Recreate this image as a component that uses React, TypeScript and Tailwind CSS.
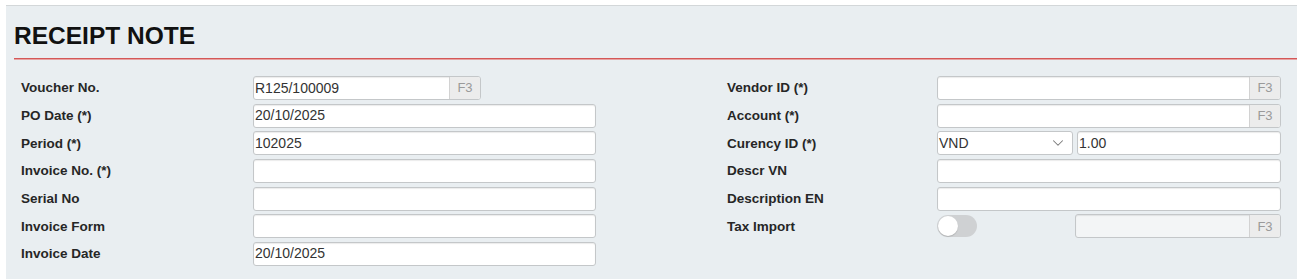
import { ChevronDown } from 'lucide-react';

const font = { fontFamily: '"Liberation Sans", Arial, sans-serif' };

function Label({ text }: { text: string }) {
  return <div className="flex items-center text-[13.5px] font-bold text-[#262626] leading-none">{text}</div>;
}

function TextBox({ value = '', className = '' }: { value?: string; className?: string }) {
  return (
    <div className={`h-[24px] flex items-center bg-white border border-[#c4c7c9] rounded-[3px] shadow-[inset_0_1px_1px_rgba(0,0,0,0.08)] px-[1px] text-[14px] text-[#333] ${className}`}>
      {value}
    </div>
  );
}

function LookupBox({ value = '', className = '', disabled = false }: { value?: string; className?: string; disabled?: boolean }) {
  return (
    <div className={`h-[24px] flex border border-[#c4c7c9] rounded-[3px] overflow-hidden shadow-[inset_0_1px_1px_rgba(0,0,0,0.08)] ${disabled ? 'bg-[#f3f5f6]' : 'bg-white'} ${className}`}>
      <div className="flex-1 flex items-center px-[1px] text-[14px] text-[#333]">{value}</div>
      <div className="w-[31px] flex items-center justify-center bg-[#ececec] border-l border-[#d2d2d2] text-[13px] text-[#9a9a9a]">F3</div>
    </div>
  );
}

export default function App() {
  return (
    <div className="w-[1297px] h-[279px] bg-white pt-[5px] pl-[6px] overflow-hidden" style={font}>
      <div className="h-full bg-[#e9eef1] border-t border-[#d3d7d9]">
        <div className="pl-[8px] pt-[18px]">
          <div className="text-[24.5px] leading-[24px] font-bold text-[#111]">RECEIPT NOTE</div>
          <div className="mt-[10px] h-[2px] bg-[#d45757] border-b border-[#e6a3a3]" />
        </div>

        <div className="mt-[16px] pl-[15px] grid grid-cols-[575px_544px] gap-x-[131px]">
          {/* Left column */}
          <div className="grid grid-cols-[232px_343px] auto-rows-[24px] gap-y-[3.67px]">
            <Label text="Voucher No." />
            <LookupBox value="R125/100009" className="w-[228px]" />
            <Label text="PO Date (*)" />
            <TextBox value="20/10/2025" />
            <Label text="Period (*)" />
            <TextBox value="102025" />
            <Label text="Invoice No. (*)" />
            <TextBox />
            <Label text="Serial No" />
            <TextBox />
            <Label text="Invoice Form" />
            <TextBox />
            <Label text="Invoice Date" />
            <TextBox value="20/10/2025" />
          </div>

          {/* Right column */}
          <div className="grid grid-cols-[210px_344px] auto-rows-[24px] gap-y-[3.67px]">
            <Label text="Vendor ID (*)" />
            <LookupBox />
            <Label text="Account (*)" />
            <LookupBox />
            <Label text="Curency ID (*)" />
            <div className="flex gap-[4px]">
              <div className="w-[136px] h-[24px] flex items-center justify-between bg-white border border-[#c4c7c9] rounded-[3px] px-[1px] text-[14px] text-[#333]">
                <span>VND</span>
                <ChevronDown size={18} strokeWidth={1.4} className="text-[#777] mr-[4px]" />
              </div>
              <TextBox value="1.00" className="flex-1" />
            </div>
            <Label text="Descr VN" />
            <TextBox />
            <Label text="Description EN" />
            <TextBox />
            <Label text="Tax Import" />
            <div className="flex items-center justify-between">
              <div className="w-[40px] h-[22px] rounded-full bg-[#cfd1d3] flex items-center px-[1px]">
                <div className="w-[20px] h-[20px] rounded-full bg-white shadow-[0_1px_1px_rgba(0,0,0,0.15)]" />
              </div>
              <LookupBox disabled className="w-[206px]" />
            </div>
          </div>
        </div>
      </div>
    </div>
  );
}
